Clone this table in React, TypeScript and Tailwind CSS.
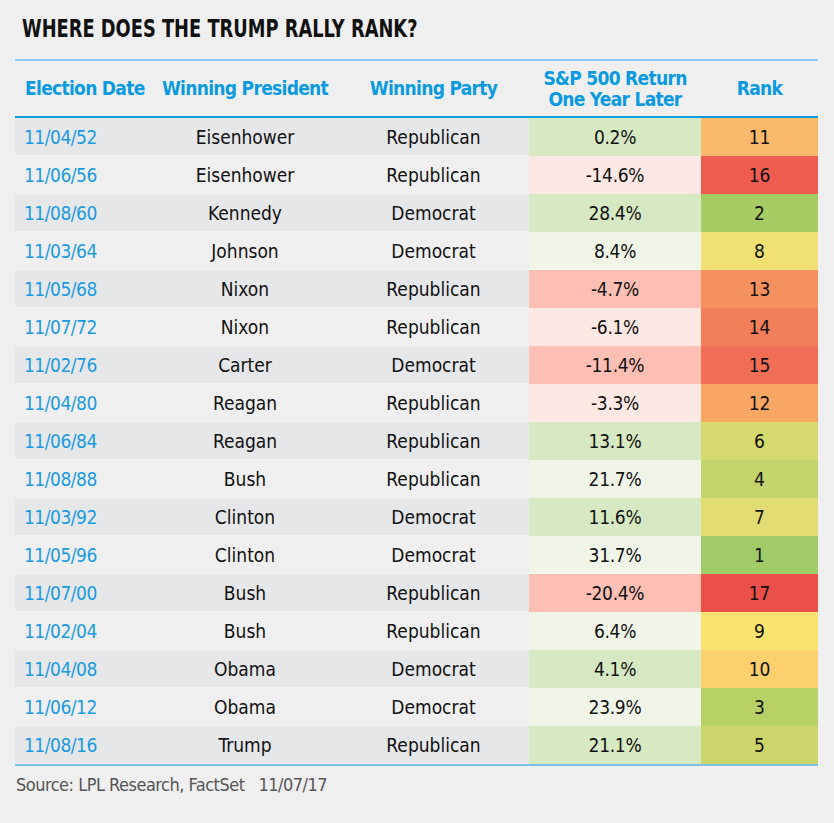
const ROWS = [
  { date: "11/04/52", pres: "Eisenhower", party: "Republican", ret: "0.2%", rank: 11 },
  { date: "11/06/56", pres: "Eisenhower", party: "Republican", ret: "-14.6%", rank: 16 },
  { date: "11/08/60", pres: "Kennedy", party: "Democrat", ret: "28.4%", rank: 2 },
  { date: "11/03/64", pres: "Johnson", party: "Democrat", ret: "8.4%", rank: 8 },
  { date: "11/05/68", pres: "Nixon", party: "Republican", ret: "-4.7%", rank: 13 },
  { date: "11/07/72", pres: "Nixon", party: "Republican", ret: "-6.1%", rank: 14 },
  { date: "11/02/76", pres: "Carter", party: "Democrat", ret: "-11.4%", rank: 15 },
  { date: "11/04/80", pres: "Reagan", party: "Republican", ret: "-3.3%", rank: 12 },
  { date: "11/06/84", pres: "Reagan", party: "Republican", ret: "13.1%", rank: 6 },
  { date: "11/08/88", pres: "Bush", party: "Republican", ret: "21.7%", rank: 4 },
  { date: "11/03/92", pres: "Clinton", party: "Democrat", ret: "11.6%", rank: 7 },
  { date: "11/05/96", pres: "Clinton", party: "Democrat", ret: "31.7%", rank: 1 },
  { date: "11/07/00", pres: "Bush", party: "Republican", ret: "-20.4%", rank: 17 },
  { date: "11/02/04", pres: "Bush", party: "Republican", ret: "6.4%", rank: 9 },
  { date: "11/04/08", pres: "Obama", party: "Democrat", ret: "4.1%", rank: 10 },
  { date: "11/06/12", pres: "Obama", party: "Democrat", ret: "23.9%", rank: 3 },
  { date: "11/08/16", pres: "Trump", party: "Republican", ret: "21.1%", rank: 5 },
];

// rank -> cell colour, green (1) through yellow to red (17)
const RANK_BG: Record<number, string> = {
  1: "bg-[#9fcc67]",
  2: "bg-[#a6cd64]",
  3: "bg-[#b8d167]",
  4: "bg-[#c2d46b]",
  5: "bg-[#cbd56b]",
  6: "bg-[#d6da6f]",
  7: "bg-[#e3dc72]",
  8: "bg-[#f1e174]",
  9: "bg-[#fbe36f]",
  10: "bg-[#fdd06e]",
  11: "bg-[#f9b96a]",
  12: "bg-[#f7a664]",
  13: "bg-[#f4915e]",
  14: "bg-[#f27e5a]",
  15: "bg-[#f06d56]",
  16: "bg-[#ee5d50]",
  17: "bg-[#eb4f4a]",
};

function returnBg(ret: string, shaded: boolean) {
  const neg = ret.startsWith("-");
  if (shaded) return neg ? "bg-[#fdbfb4]" : "bg-[#d7e9c2]";
  return neg ? "bg-[#fde8e3]" : "bg-[#f0f5e8]";
}

const FONT = "font-['DejaVu_Sans_Condensed','DejaVu_Sans',sans-serif]";

export default function App() {
  return (
    <div className={`w-[834px] h-[823px] bg-[#efefef] ${FONT}`}>
      <div className="pl-[22px] pt-[15px] h-[59px]">
        <h1 className="inline-block origin-left scale-x-[0.825] whitespace-nowrap text-[24px] leading-[28px] font-bold text-[#111]">
          WHERE DOES THE TRUMP RALLY RANK?
        </h1>
      </div>

      <div className="ml-[15px] w-[803px]">
        {/* header */}
        <div className="grid grid-cols-[137px_186px_191px_172px_117px] h-[59px] border-t-2 border-t-[#8ecbec] border-b-2 border-b-[#0aa0e0] text-[19px] leading-[21px] font-bold tracking-[-0.7px] whitespace-nowrap text-[#0a9ae0]">
          <div className="flex items-center pl-[10px]">Election Date</div>
          <div className="flex items-center justify-center">Winning President</div>
          <div className="flex items-center justify-center">Winning Party</div>
          <div className="flex items-center justify-center text-center">
            S&amp;P 500 Return
            <br />
            One Year Later
          </div>
          <div className="flex items-center justify-center">Rank</div>
        </div>

        {/* body */}
        {ROWS.map((r, i) => {
          const shaded = i % 2 === 0;
          return (
            <div
              key={r.date}
              className={`grid grid-cols-[137px_186px_191px_172px_117px] h-[38px] text-[19px] leading-[38px] border-b border-b-[#f2f2f2] ${
                shaded ? "bg-[#e6e7e9]" : "bg-[#efefef]"
              }`}
            >
              <div className="pl-[9px] tracking-[-0.5px] text-[#1a9be0]">{r.date}</div>
              <div className="text-center text-[#111]">{r.pres}</div>
              <div className="text-center text-[#111]">{r.party}</div>
              <div className={`text-center tracking-[-0.3px] text-[#111] ${returnBg(r.ret, shaded)}`}>{r.ret}</div>
              <div className={`text-center text-[#111] ${RANK_BG[r.rank]}`}>{r.rank}</div>
            </div>
          );
        })}
        <div className="h-[2px] bg-[#7cc3ea]" />
      </div>

      <p className="pl-[16px] pt-[7px] text-[18px] leading-[24px] tracking-[-0.5px] text-[#555]">
        Source: LPL Research, FactSet&nbsp;&nbsp;&nbsp;11/07/17
      </p>
    </div>
  );
}
